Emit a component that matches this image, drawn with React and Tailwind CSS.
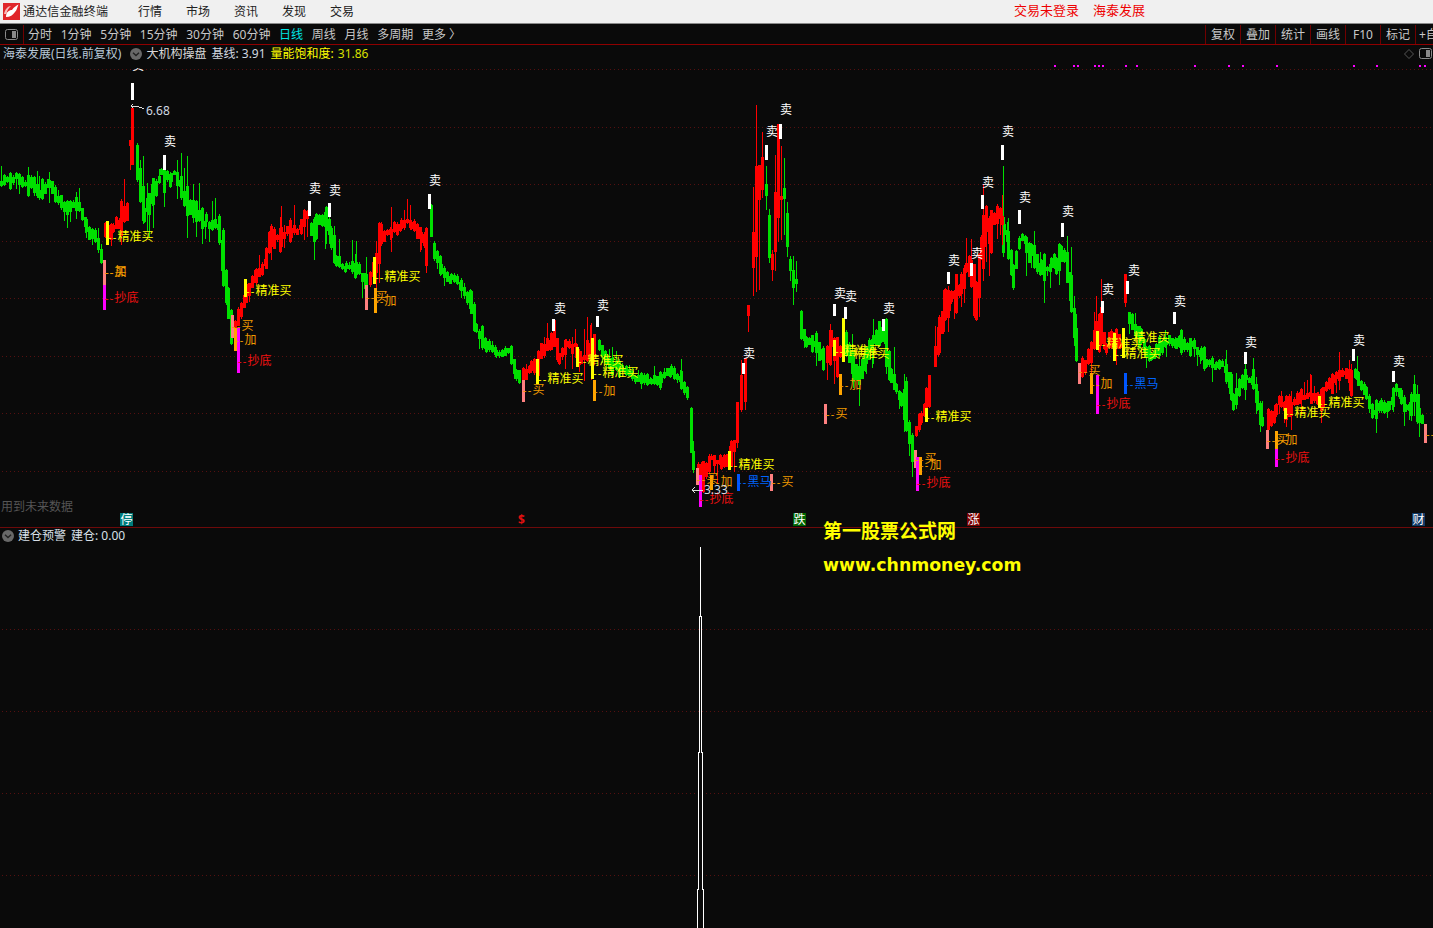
import React from "react";

const FONT = "font-['Noto_Sans','Noto_Sans_CJK_SC',sans-serif]";

// price path: colour, volatility, waypoints [x, y]
const SEGS = [
  ["g", 7, [[0, 180], [15, 178], [30, 180], [38, 195], [48, 185], [60, 200], [75, 210], [85, 225], [97, 245], [102, 258]]],
  ["r", 10, [[104, 232], [112, 222], [120, 222], [128, 208]]],
  ["g", 10, [[136, 160], [143, 210], [148, 200], [152, 182], [160, 176], [170, 180], [180, 178], [186, 195], [195, 212], [205, 216], [218, 226], [222, 256], [227, 300], [231, 325]]],
  ["r", 8, [[234, 322], [240, 305], [245, 290], [255, 275], [265, 265], [270, 240], [280, 235], [290, 230], [300, 226], [307, 215]]],
  ["g", 9, [[310, 228], [315, 224], [325, 215], [330, 235], [335, 255], [345, 262], [355, 265], [365, 280], [367, 285]]],
  ["r", 8, [[369, 280], [375, 262], [380, 236], [390, 236], [400, 226], [410, 226], [420, 236], [425, 245], [428, 218]]],
  ["g", 5, [[430, 222], [433, 250], [440, 265], [450, 275], [460, 285], [470, 300], [475, 330], [485, 345], [495, 350], [510, 355], [515, 375], [520, 380]]],
  ["r", 9, [[522, 378], [530, 375], [537, 366], [540, 352], [550, 340], [553, 332], [558, 360], [565, 350], [575, 350], [580, 355], [590, 350], [595, 330]]],
  ["g", 4, [[598, 338], [605, 355], [612, 365], [625, 370], [640, 380], [650, 385], [660, 378], [670, 372], [680, 380], [687, 395]]],
  ["g", 5, [[690, 430], [692, 458], [695, 470]]],
  ["r", 9, [[697, 472], [702, 482], [710, 466], [720, 466], [730, 450], [735, 442]]],
  ["g", 7, [[800, 325], [805, 338], [815, 342], [822, 358], [824, 370]]],
  ["r", 12, [[826, 354], [830, 340], [836, 352], [842, 345]]],
  ["g", 9, [[845, 340], [852, 365], [858, 380], [865, 355], [872, 345], [880, 335], [885, 345], [890, 382], [895, 390], [900, 396], [905, 405], [908, 432], [912, 452]]],
  ["r", 6, [[915, 432], [920, 420], [925, 410], [930, 388]]],
  ["r", 16, [[934, 360], [938, 350], [945, 305], [950, 305], [955, 310], [960, 298], [965, 282], [970, 275], [975, 290], [980, 240], [985, 222], [990, 240], [996, 222], [1000, 215]]],
  ["g", 10, [[1003, 235], [1007, 245], [1012, 272], [1018, 248], [1025, 240], [1030, 250], [1040, 265], [1050, 260], [1055, 262], [1060, 254], [1066, 268], [1070, 300], [1075, 345], [1078, 365]]],
  ["r", 12, [[1081, 365], [1090, 345], [1095, 335], [1100, 328], [1105, 345], [1110, 335], [1115, 342], [1122, 338]]],
  ["g", 6, [[1128, 312], [1135, 330], [1140, 335], [1145, 348], [1150, 350], [1155, 345], [1165, 340], [1175, 340], [1180, 335], [1190, 345], [1200, 352], [1205, 362], [1215, 368], [1225, 372], [1230, 388], [1232, 402], [1238, 386], [1245, 375], [1252, 378], [1256, 398], [1261, 423], [1264, 420]]],
  ["r", 7, [[1267, 422], [1275, 410], [1280, 400], [1285, 405], [1290, 410], [1293, 400], [1300, 395], [1310, 395], [1317, 400], [1322, 400], [1325, 390], [1335, 380], [1345, 377], [1350, 385], [1352, 372]]],
  ["g", 6, [[1354, 374], [1360, 385], [1365, 395], [1372, 410], [1380, 410], [1388, 405], [1392, 400], [1395, 390], [1400, 398], [1405, 410], [1410, 408], [1413, 395], [1418, 415], [1423, 425]]],
];

// hand-placed candles: colour, x, bodyTop, bodyBottom, wickTop, wickBottom
const EXTRA = [
  ["r", 130, 140, 146, 140, 170], ["r", 132, 108, 165, 106, 165],
  ["r", 737, 402, 443, 402, 448], ["r", 741, 375, 410, 360, 412], ["r", 745, 358, 402, 358, 410],
  ["r", 748, 305, 316, 305, 332],
  ["r", 753, 232, 268, 187, 296], ["r", 756, 166, 257, 105, 292], ["r", 759, 165, 200, 165, 290], ["r", 762, 157, 190, 132, 198],
  ["g", 766, 184, 196, 166, 210], ["g", 769, 215, 258, 209, 263], ["r", 772, 254, 270, 250, 281],
  ["r", 775, 192, 252, 155, 271], ["r", 778, 124, 218, 124, 242], ["r", 781, 196, 200, 146, 240],
  ["g", 784, 188, 199, 158, 235], ["g", 787, 213, 247, 202, 257], ["g", 790, 259, 271, 256, 281], ["g", 793, 270, 288, 256, 305], ["g", 796, 279, 284, 261, 292],
  ["r", 944, 290, 321, 289, 332], ["r", 948, 290, 318, 286, 332], ["r", 1002, 216, 225, 195, 245], ["g", 1003, 217, 253, 166, 257],
  ["r", 983, 215, 269, 184, 281], ["r", 1125, 274, 303, 274, 307],
  ["g", 1357, 371, 380, 356, 385],
];

function rng(seed) {
  let a = seed;
  return () => {
    a = (a + 0x6d2b79f5) | 0;
    let t = Math.imul(a ^ (a >>> 15), 1 | a);
    t = (t + Math.imul(t ^ (t >>> 7), 61 | t)) ^ t;
    return ((t ^ (t >>> 14)) >>> 0) / 4294967296;
  };
}

function buildCandles() {
  const r = rng(20240);
  let red = "";
  let green = "";
  const add = (c, x, t, b, wt, wb) => {
    const d = `M${x} ${t}h3v${Math.max(1, b - t)}h-3zM${x + 1} ${wt}h1v${Math.max(1, wb - wt)}h-1z`;
    if (c === "r") red += d;
    else green += d;
  };
  let walk = 0;
  SEGS.forEach(([c, vol, pts]) => {
    for (let i = 0; i < pts.length - 1; i++) {
      const [x0, y0] = pts[i];
      const [x1, y1] = pts[i + 1];
      const slope = Math.abs(y1 - y0) / Math.max(1, x1 - x0);
      for (let x = x0; x < x1; x += 3) {
        walk = 0.75 * walk + (r() - 0.5) * vol * 1.1;
        const cy = y0 + ((y1 - y0) * (x - x0)) / (x1 - x0) + walk;
        const big = r() > 0.72 ? 2.6 : 1;
        const h = 3 + r() * vol * 1.1 * big + slope * 3;
        const t = Math.round(cy - h / 2);
        const b = Math.round(cy + h / 2);
        const up = r() > 0.72 ? r() * vol * 3 : r() * 2;
        const down = r() > 0.72 ? r() * vol * 2.4 : r() * 2;
        add(c, x, t, b, Math.round(t - up), Math.round(b + down));
      }
    }
  });
  EXTRA.forEach(([c, x, t, b, wt, wb]) => add(c, x - 1, t, b, wt, wb));
  return { red, green };
}

const CANDLES = buildCandles();

// y values below are page coordinates; the pane starts at y = 45
const PANE_TOP = 45;
const SELL = [
  [132, 83, 100, 138, 65], [164, 155, 170, 170, 141], [309, 201, 216, 315, 188], [329, 203, 217, 335, 190], [429, 194, 209, 435, 180],
  [553, 319, 331, 560, 308], [597, 316, 327, 603, 305], [743, 363, 374, 749, 353], [766, 145, 160, 772, 131], [780, 124, 139, 786, 109],
  [834, 304, 316, 840, 293], [845, 307, 319, 851, 296], [883, 319, 331, 889, 308], [948, 272, 284, 954, 260], [971, 263, 276, 977, 253],
  [982, 195, 209, 988, 182], [1002, 145, 160, 1008, 131], [1019, 210, 224, 1025, 197], [1062, 223, 237, 1068, 211], [1102, 301, 313, 1108, 289],
  [1127, 281, 294, 1134, 270], [1174, 312, 324, 1180, 301], [1245, 352, 364, 1251, 342], [1353, 349, 361, 1359, 340], [1393, 371, 382, 1399, 361],
];

const YEL = "#ffff00";
const SAL = "#ff8080";
const ORG = "#ffa500";
const MAG = "#ff00ff";
const BLU = "#0055ff";

// bar x, y1, y2, colour
const BARS = [
  [107, 221, 245, YEL], [245, 279, 297, YEL], [374, 257, 284, YEL], [537, 359, 384, YEL], [577, 347, 367, YEL], [592, 338, 379, YEL], [729, 451, 470, YEL],
  [834, 340, 356, YEL], [843, 318, 362, YEL], [926, 408, 422, YEL], [1097, 331, 350, YEL], [1114, 333, 361, YEL], [1123, 328, 358, YEL], [1285, 408, 419, YEL], [1319, 396, 408, YEL],
  [104, 260, 285, SAL], [232, 315, 338, SAL], [366, 285, 310, SAL], [523, 380, 402, SAL], [697, 468, 485, SAL], [771, 474, 491, SAL], [825, 404, 424, SAL], [915, 450, 468, SAL], [1079, 363, 384, SAL], [1267, 430, 449, SAL], [1425, 424, 443, SAL],
  [235, 328, 351, ORG], [375, 288, 313, ORG], [594, 380, 401, ORG], [711, 475, 490, ORG], [840, 374, 395, ORG], [920, 457, 475, ORG], [1091, 373, 394, ORG], [1276, 431, 449, ORG],
  [104, 285, 310, MAG], [238, 328, 373, MAG], [700, 475, 507, MAG], [917, 457, 491, MAG], [1097, 375, 414, MAG], [1276, 449, 467, MAG],
  [738, 474, 491, BLU], [1125, 373, 394, BLU],
];

const Y = "text-[#ffff00]";
const O = "text-[#f09a00]";
const R = "text-[#ee1111]";
const B = "text-[#0066ff]";

// label: x, y, text, colour class
const LABELS = [
  [107, 236, "精准买", Y], [245, 290, "精准买", Y], [374, 276, "精准买", Y], [537, 378, "精准买", Y],
  [577, 360, "精准买", Y], [592, 372, "精准买", Y], [728, 464, "精准买", Y], [834, 350, "精准买", Y],
  [843, 353, "精准买", Y], [925, 416, "精准买", Y], [1096, 343, "精准买", Y], [1114, 353, "精准买", Y],
  [1123, 337, "精准买", Y], [1284, 412, "精准买", Y], [1318, 402, "精准买", Y],
  [104, 271, "买", O], [104, 271, "加", O], [231, 325, "买", O], [365, 296, "买", O], [522, 389, "买", O],
  [696, 478, "买", O], [771, 481, "买", O], [825, 413, "买", O], [914, 458, "买", O], [1078, 370, "买", O], [1266, 439, "买", O],
  [234, 339, "加", O], [374, 300, "加", O], [593, 390, "加", O], [710, 481, "加", O], [839, 384, "加", O],
  [919, 464, "加", O], [1090, 383, "加", O], [1275, 439, "加", O], [1425, 433, "", O],
  [104, 297, "抄底", R], [237, 360, "抄底", R], [699, 498, "抄底", R], [916, 482, "抄底", R], [1096, 403, "抄底", R], [1275, 457, "抄底", R],
  [737, 481, "黑马", B], [1124, 383, "黑马", B],
];

const DOTS = [1054, 1073, 1077, 1094, 1098, 1102, 1125, 1136, 1194, 1228, 1242, 1276, 1353, 1376, 1419, 1424];
const MAIN_GRID = [69, 127, 184, 241, 298, 356, 413, 471];
const SUB_GRID = [629, 711, 793, 875];
const TABS = ["分时", "1分钟", "5分钟", "15分钟", "30分钟", "60分钟", "日线", "周线", "月线", "多周期", "更多 〉"];
const RIGHT_TABS = ["复权", "叠加", "统计", "画线", "F10", "标记"];
const MENU = ["行情", "市场", "资讯", "发现", "交易"];

function Chevron() {
  return (
    <svg width="12" height="12" viewBox="0 0 12 12" className="shrink-0">
      <circle cx="6" cy="6" r="6" fill="#686868" />
      <path d="M3 4.8 6 7.6 9 4.8" fill="none" stroke="#222" strokeWidth="1.4" />
    </svg>
  );
}

function PanelIcon() {
  return (
    <svg width="13" height="11" viewBox="0 0 13 11">
      <rect x="0.500" y="0.500" width="12" height="10" rx="2" fill="none" stroke="#8a8a8a" />
      <rect x="7" y="2" width="4" height="7" fill="#8a8a8a" />
    </svg>
  );
}

function Marker({ x, bg, children }) {
  return (
    <span
      className={`absolute top-[468px] w-[13px] h-[13px] text-[12px] leading-[13px] text-center text-white ${bg}`}
      style={{ left: x }}
    >
      {children}
    </span>
  );
}

export default function App() {
  return (
    <div className={`w-[1433px] h-[928px] overflow-hidden flex flex-col bg-[#0a0a0a] text-[12px] ${FONT}`}>
      {/* title bar */}
      <header className="h-[24px] shrink-0 flex items-center bg-[#f0f0f0] border-b border-[#8a8a8a] pl-[3px] text-[#222]">
        <svg width="17" height="17" viewBox="0 0 17 17" className="shrink-0">
          <rect width="17" height="17" fill="#e0262a" />
          <path d="M3 14C3 9 6 7 9 7 11 4 13 3 15.500 1.500 14 5 14 7 12 9 10 12 7 14 3 14Z" fill="#fff" />
          <path d="M1 11C2 6 5 3 8 3 6 5 4 7 3.500 11Z" fill="#f7b9b9" />
        </svg>
        <span className="ml-[3px] w-[115px] tracking-[0.15px]">通达信金融终端</span>
        <nav className="flex gap-[24px]">
          {MENU.map((m) => (
            <span key={m}>{m}</span>
          ))}
        </nav>
        <div className="ml-[660px] flex gap-[14px] text-[13px] text-[#ee0000] -translate-y-px">
          <span>交易未登录</span>
          <span>海泰发展</span>
        </div>
      </header>

      {/* toolbar */}
      <div className="h-[21px] shrink-0 flex items-stretch justify-between border-b border-[#8f0000] text-[#c8c8c8] pt-px">
        <div className="flex items-center">
          <div className="w-[24px] h-full flex items-center justify-center border-r border-[#700000]">
            <PanelIcon />
          </div>
          <div className="ml-[4px] flex gap-[8.7px]">
            {TABS.map((t) => (
              <span key={t} className={t === "日线" ? "text-[#00e5e5]" : ""}>
                {t}
              </span>
            ))}
          </div>
        </div>
        <div className="flex items-stretch w-[228px] overflow-hidden shrink-0">
          {RIGHT_TABS.map((t) => (
            <span key={t} className="w-[35px] shrink-0 flex items-center justify-center border-l border-[#700000]">
              {t}
            </span>
          ))}
          <span className="shrink-0 flex items-center pl-[3px] border-l border-[#700000] whitespace-nowrap">+自</span>
        </div>
      </div>

      {/* main pane */}
      <section className="relative h-[483px] shrink-0 border-b border-[#6e0a0a]">
        <div className="relative z-10 flex items-center h-[17px] pl-[3px] whitespace-nowrap">
          <span className="text-[#b8c8d8]">海泰发展(日线.前复权)</span>
          <span className="ml-[9px]"><Chevron /></span>
          <span className="ml-[4px] text-[#d8d8d8]">大机构操盘</span>
          <span className="ml-[5px] text-[#d0d8e0]">基线: 3.91</span>
          <span className="ml-[5px] text-[#ffff00]">量能饱和度:</span>
          <span className="ml-[4px] text-[#d8e000]">31.86</span>
          <div className="ml-auto flex items-center gap-[5px] pr-px">
            <svg width="10" height="10" viewBox="0 0 10 10">
              <path d="M5 .5 9.500 5 5 9.500 .5 5Z" fill="none" stroke="#555" />
            </svg>
            <PanelIcon />
          </div>
        </div>

        <svg
          width="1433"
          height="482"
          viewBox={`0 ${PANE_TOP} 1433 482`}
          className="absolute left-0 top-0"
        >
          {MAIN_GRID.map((y) => (
            <line key={y} x1="2" x2="1433" y1={y + 0.5} y2={y + 0.5} stroke="#551010" strokeDasharray="1 3" />
          ))}
          <g shapeRendering="crispEdges">
            <path d={CANDLES.green} fill="#00e100" />
            <path d={CANDLES.red} fill="#ff0000" />
            {DOTS.map((x) => (
              <rect key={x} x={x} y="65" width="2" height="2" fill="#ff00ff" />
            ))}
            {BARS.map(([x, a, b, c]) => (
              <rect key={`${x}-${a}`} x={x - 1} y={a} width="3" height={b - a} fill={c} />
            ))}
            {SELL.map(([x, a, b]) => (
              <rect key={x} x={x - 1} y={a} width="3" height={b - a} fill="#fff" />
            ))}
            <path d="M133 104l-2 2 2 2M132 106l5 0 7 3" stroke="#ddd" fill="none" />
            <path d="M692 490h11M695 487l-3 3 3 3" stroke="#ddd" fill="none" />
          </g>
        </svg>

        {SELL.map(([x, , , lx, ly]) => (
          <span
            key={x}
            className="absolute text-white leading-[14px] -translate-x-1/2 whitespace-nowrap"
            style={{ left: lx, top: ly - 6 - PANE_TOP, clipPath: ly < 70 ? "inset(9px 0 0 0)" : undefined }}
          >
            卖
          </span>
        ))}
        {LABELS.map(([x, y, t, c], i) => (
          <span
            key={i}
            className={`absolute leading-[14px] whitespace-nowrap ${c}`}
            style={{ left: x + 1, top: y - 6 - PANE_TOP }}
          >
            <span className="tracking-[1.2px] text-[11px]">--</span>
            {t}
          </span>
        ))}
        <span className="absolute left-[146px] top-[59px] leading-[14px] text-[#d0d8e0]">6.68</span>
        <span className="absolute left-[704px] top-[438px] leading-[14px] text-[#d0d8e0]">3.33</span>
        <span className="absolute left-px top-[455px] leading-[14px] text-[#555]">用到未来数据</span>

        <Marker x={120} bg="bg-[#007c7c]">停</Marker>
        <span className="absolute left-[518px] top-[468px] leading-[13px] text-[#e01010] text-[12px] font-bold">$</span>
        <Marker x={793} bg="bg-[#006400]">跌</Marker>
        <Marker x={967} bg="bg-[#7c0000]">涨</Marker>
        <Marker x={1412} bg="bg-[#123a66]">财</Marker>
      </section>

      {/* indicator pane */}
      <section className="relative flex-1 min-h-0">
        <div className="flex items-center h-[16px] pl-[2px] gap-[4px] whitespace-nowrap text-[#d8e0e8]">
          <Chevron />
          <span>建仓预警</span>
          <span className="ml-px">建仓: 0.00</span>
        </div>
        <svg width="1433" height="400" viewBox="0 528 1433 400" className="absolute left-0 top-0">
          {SUB_GRID.map((y) => (
            <line key={y} x1="2" x2="1433" y1={y + 0.5} y2={y + 0.5} stroke="#551010" strokeDasharray="1 3" />
          ))}
          <path
            d="M700 547h1V617h-1zM699 616h1V753h-1zM701 616h1V753h-1zM698 752h1V890h-1zM702 752h1V890h-1zM697 889h1V928h-1zM703 889h1V928h-1z"
            fill="#fff"
            shapeRendering="crispEdges"
          />
        </svg>
        <div className="absolute left-[823px] top-[-9px] flex flex-col text-[#ffff00]">
          <span className="text-[19px] font-bold leading-[24px]">第一股票公式网</span>
          <span className="mt-[10px] text-[17.3px] font-bold leading-[24px] font-['DejaVu_Sans',sans-serif]">www.chnmoney.com</span>
        </div>
      </section>
    </div>
  );
}
